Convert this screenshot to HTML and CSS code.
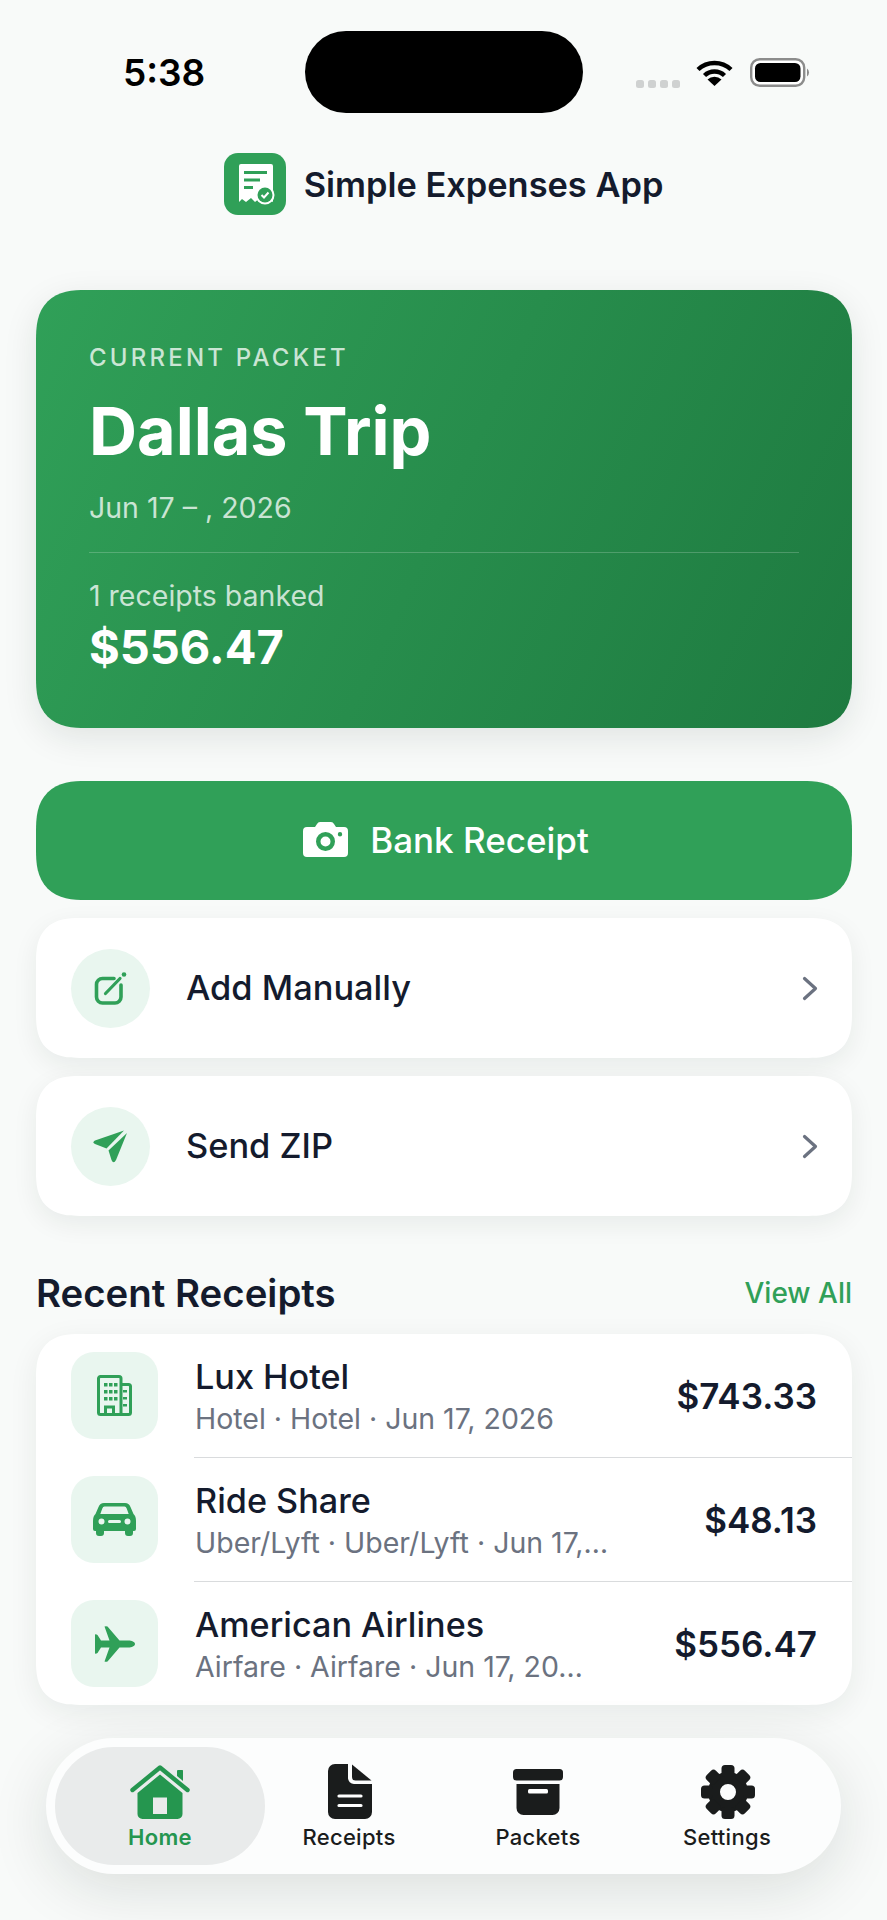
FILE: index.html
```html
<!DOCTYPE html>
<html lang="en">
<head>
<meta charset="utf-8">
<title>Simple Expenses App</title>
<link rel="stylesheet" href="styles.css">
</head>
<body>
<div class="screen">
  <div class="status">
    <div class="time">5:38</div>
    <div class="island"></div>
    <div class="status-icons">
      <div class="dots"><i></i><i></i><i></i><i></i></div>
      <svg class="wifi" viewBox="0 0 37 27"><path d="M2 10.5A24 24 0 0 1 35 10.5M8.5 16.5A14.5 14.5 0 0 1 28.5 16.5" fill="none" stroke="#000" stroke-width="4.4"/><path d="M18.5 27L11.5 20.5A10 10 0 0 1 25.5 20.5Z" fill="#000"/></svg>
      <svg class="battery" viewBox="0 0 60 29"><rect x="1.2" y="1.2" width="53" height="26.6" rx="8.5" fill="#fff" stroke="#8c8c8c" stroke-width="2.4"/><rect x="5" y="5" width="45.5" height="19" rx="5.5" fill="#000"/><path d="M57 10.500a5 5 0 0 1 0 8z" fill="#8c8c8c"/></svg>
    </div>
  </div>

  <header class="brand">
    <svg class="logo" viewBox="0 0 62 62">
      <rect width="62" height="62" rx="14" fill="#30a058"/>
      <path d="M17 11H47a2 2 0 0 1 2 2V49L44 46L40 49L36 45L31 49L27 45L22 49L18 46L15 49V13a2 2 0 0 1 2-2Z" fill="#fff"/>
      <path d="M20 19.500H43M20 27H36M20 34.500H29" stroke="#30a058" stroke-width="2.800" fill="none"/>
      <circle cx="41" cy="42" r="9.500" fill="#fff"/>
      <circle cx="41" cy="42" r="7.500" fill="#30a058"/>
      <path d="M37.500 42L40 44.500L44.500 39.500" stroke="#fff" stroke-width="2" fill="none"/>
    </svg>
    <div class="brand-name">Simple Expenses App</div>
  </header>

  <main class="content">
    <section class="packet">
      <div class="packet-label">CURRENT PACKET</div>
      <h1 class="packet-title">Dallas Trip</h1>
      <div class="packet-date">Jun 17 – , 2026</div>
      <div class="packet-rule"></div>
      <div class="packet-count">1 receipts banked</div>
      <div class="packet-total">$556.47</div>
    </section>

    <button class="primary">
      <svg class="camera" viewBox="0 0 45 35"><path fill-rule="evenodd" d="M4 5H12L14 2Q15 0 17 0H28Q30 0 31 2L33 5H41Q45 5 45 9V31Q45 35 41 35H4Q0 35 0 31V9Q0 5 4 5ZM22.500 10A9.500 9.500 0 1 0 22.500 29A9.500 9.500 0 1 0 22.500 10ZM22.500 14.500A5 5 0 1 1 22.500 24.500A5 5 0 1 1 22.500 14.500ZM37 10A2.200 2.200 0 1 0 37 14.400A2.200 2.200 0 1 0 37 10Z" fill="#fff"/></svg>
      <span>Bank Receipt</span>
    </button>

    <div class="action">
      <div class="action-icon">
        <svg class="i-edit" viewBox="0 0 33 33"><path d="M20 6.500H8.500A6 6 0 0 0 2.500 12.500V25A6 6 0 0 0 8.500 31H21A6 6 0 0 0 27 25V13" fill="none" stroke="#30a058" stroke-width="3.600" stroke-linecap="round"/><path d="M11.500 21.500L26 6.500" stroke="#30a058" stroke-width="3.200" stroke-linecap="round"/><circle cx="30" cy="2.500" r="2.300" fill="#30a058"/></svg>
      </div>
      <div class="action-text">Add Manually</div>
      <svg class="chev" viewBox="0 0 16 25"><path d="M2.500 2.500L13.500 12.500L2.500 22.500" fill="none" stroke="#6b7280" stroke-width="3.200" stroke-linecap="round" stroke-linejoin="round"/></svg>
    </div>

    <div class="action">
      <div class="action-icon">
        <svg class="i-send" viewBox="0 0 35 34"><path d="M31 1.500L2 11.500Q-1 13 2 15L13.500 19.500Z" fill="#30a058"/><path d="M34 4L23 31Q20.500 35.500 18.500 31L15.500 21.500Z" fill="#30a058"/></svg>
      </div>
      <div class="action-text">Send ZIP</div>
      <svg class="chev" viewBox="0 0 16 25"><path d="M2.500 2.500L13.500 12.500L2.500 22.500" fill="none" stroke="#6b7280" stroke-width="3.200" stroke-linecap="round" stroke-linejoin="round"/></svg>
    </div>

    <div class="section-head">
      <h2 class="section-title">Recent Receipts</h2>
      <div class="section-link">View All</div>
    </div>

    <section class="list">
      <div class="row">
        <div class="tile">
          <svg class="i-building" viewBox="0 0 35 41">
            <path d="M3.500 1.500H22A2 2 0 0 1 24 3.500V39.500H3.500A2 2 0 0 1 1.500 37.500V3.500A2 2 0 0 1 3.500 1.500ZM24 9.500H31.500A2 2 0 0 1 33.500 11.500V37.500A2 2 0 0 1 31.500 39.500H24M8.500 39V32H16.500V39" fill="none" stroke="#30a058" stroke-width="3"/>
            <path d="M7 8h3.500v3.500H7zM12 8h3.500v3.500H12zM17 8h3.500v3.500H17zM7 15h3.500v3.500H7zM12 15h3.500v3.500H12zM17 15h3.500v3.500H17zM7 22h3.500v3.500H7zM12 22h3.500v3.500H12zM17 22h3.500v3.500H17zM26 15h4v2.500h-4zM26 22h4v2.500h-4zM26 29h4v2.500h-4z" fill="#30a058"/>
          </svg>
        </div>
        <div class="row-text">
          <div class="row-name">Lux Hotel</div>
          <div class="row-sub">Hotel · Hotel · Jun 17, 2026</div>
        </div>
        <div class="row-amount">$743.33</div>
      </div>
      <div class="sep"></div>
      <div class="row">
        <div class="tile">
          <svg class="i-car" viewBox="0 0 43 33">
            <path fill-rule="evenodd" d="M11 0H32Q36 0 37.500 4L40.500 11Q43 13 43 18V26Q43 28 41 28H40V30Q40 33 37 33H35Q32 33 32 30V28H11V30Q11 33 8 33H6Q3 33 3 30V28H2Q0 28 0 26V18Q0 13 2.500 11L5.500 4Q7 0 11 0ZM11.500 3.500Q10 3.500 9.300 5.500L7.300 11H35.700L33.700 5.500Q33 3.500 31.500 3.500ZM8.500 15.500A3 3 0 1 0 8.500 21.500A3 3 0 1 0 8.500 15.500ZM34.500 15.500A3 3 0 1 0 34.500 21.500A3 3 0 1 0 34.500 15.500ZM16.500 17A1.500 1.500 0 0 0 16.500 20H26.500A1.500 1.500 0 0 0 26.500 17Z" fill="#30a058"/>
          </svg>
        </div>
        <div class="row-text">
          <div class="row-name">Ride Share</div>
          <div class="row-sub">Uber/Lyft · Uber/Lyft · Jun 17,…</div>
        </div>
        <div class="row-amount">$48.13</div>
      </div>
      <div class="sep"></div>
      <div class="row">
        <div class="tile">
          <svg class="i-plane" viewBox="0 0 40 36">
            <path d="M40 18C40 16 36.500 14.500 33.500 14.500H24.500L12.500 0.500Q11 0 9.500 0.500L14.500 14.500H6L2.500 9Q1 8 0 8.500V27.500Q1 28 2.500 27L6 21.500H14.500L9.500 35.500Q11 36 12.500 35.500L24.500 21.500H33.500C36.500 21.500 40 20 40 18Z" fill="#30a058"/>
          </svg>
        </div>
        <div class="row-text">
          <div class="row-name">American Airlines</div>
          <div class="row-sub">Airfare · Airfare · Jun 17, 20…</div>
        </div>
        <div class="row-amount">$556.47</div>
      </div>
    </section>
  </main>

  <nav class="tabbar">
    <div class="tab tab-active">
      <svg class="i-home" viewBox="0 0 60 54">
        <path d="M2.500 25L30 2.500L57.500 25" fill="none" stroke="#25964f" stroke-width="4.400" stroke-linecap="round" stroke-linejoin="round"/>
        <path d="M47 11V5.500Q47 5 48 5H52.500Q53 5 53 5.500V16Z" fill="#25964f"/>
        <path fill-rule="evenodd" d="M30 9.500L52.500 28V49A5 5 0 0 1 47.500 54H12.500A5 5 0 0 1 7.500 49V28ZM23 32.500V49H37V32.500Z" fill="#25964f"/>
      </svg>
      <span class="tab-label">Home</span>
    </div>
    <div class="tab">
      <svg class="i-doc" viewBox="0 0 44 55">
        <path d="M7 0H20V14A6 6 0 0 0 26 20H44V48A7 7 0 0 1 37 55H7A7 7 0 0 1 0 48V7A7 7 0 0 1 7 0Z" fill="#1a1c1c"/>
        <path d="M24 0.500L43.500 16.500H27.500A3.500 3.500 0 0 1 24 13Z" fill="#1a1c1c"/>
        <path d="M11 32H33M11 41.500H33" stroke="#fff" stroke-width="3.200" stroke-linecap="round"/>
      </svg>
      <span class="tab-label">Receipts</span>
    </div>
    <div class="tab">
      <svg class="i-box" viewBox="0 0 50 46">
        <rect width="50" height="11.500" rx="3.500" fill="#1a1c1c"/>
        <path d="M3.500 15H46.500V39A7 7 0 0 1 39.500 46H10.500A7 7 0 0 1 3.500 39Z" fill="#1a1c1c"/>
        <rect x="15" y="20" width="20" height="4.500" rx="1.500" fill="#fff"/>
      </svg>
      <span class="tab-label">Packets</span>
    </div>
    <div class="tab">
      <svg class="i-gear" viewBox="0 0 54 54">
        <circle cx="27" cy="27" r="14" fill="none" stroke="#1a1c1c" stroke-width="12"/>
        <g fill="#1a1c1c">
          <rect x="20.500" width="13" height="12" rx="3.500"/>
          <rect x="20.500" width="13" height="12" rx="3.500" transform="rotate(45 27 27)"/>
          <rect x="20.500" width="13" height="12" rx="3.500" transform="rotate(90 27 27)"/>
          <rect x="20.500" width="13" height="12" rx="3.500" transform="rotate(135 27 27)"/>
          <rect x="20.500" width="13" height="12" rx="3.500" transform="rotate(180 27 27)"/>
          <rect x="20.500" width="13" height="12" rx="3.500" transform="rotate(225 27 27)"/>
          <rect x="20.500" width="13" height="12" rx="3.500" transform="rotate(270 27 27)"/>
          <rect x="20.500" width="13" height="12" rx="3.500" transform="rotate(315 27 27)"/>
        </g>
      </svg>
      <span class="tab-label">Settings</span>
    </div>
  </nav>
</div>
</body>
</html>
```
FILE: styles.css
```css
* { box-sizing: border-box; }
html, body { margin: 0; padding: 0; }
body {
  width: 887px;
  height: 1920px;
  overflow: hidden;
  background: #f8faf9;
  font-family: Inter, "Liberation Sans", sans-serif;
  color: #141b2d;
}
.screen { width: 887px; height: 1920px; padding-top: 31px; }

.status {
  display: grid;
  grid-template-columns: 305px 278px 1fr;
  align-items: center;
  height: 82px;
}
.time {
  padding-left: 123px;
  font-size: 37px;
  font-weight: 600;
  color: #000;
}
.island { height: 82px; background: #000; border-radius: 41px; }
.status-icons { display: flex; align-items: center; padding-left: 53px; }
.dots { display: flex; gap: 4px; margin-top: 23px; }
.dots i { width: 8px; height: 8px; border-radius: 2.5px; background: #cfd1d1; }
.wifi { width: 37px; height: 27px; margin-left: 16px; }
.battery { width: 60px; height: 29px; margin-left: 17px; }

.brand {
  display: flex;
  justify-content: center;
  align-items: center;
  gap: 18px;
  margin-top: 40px;
  height: 62px;
}
.logo { width: 62px; height: 62px; }
.brand-name { font-size: 34.400px; font-weight: 600; }

.content { padding: 0 35px 0 36px; margin-top: 75px; }

.packet {
  height: 438px;
  padding: 55px 53px 0;
  border-radius: 50px;
  corner-shape: superellipse(1.4);
  background: linear-gradient(115deg, #30a058 0%, #1e7a40 100%);
  box-shadow: 0 10px 34px rgba(20, 40, 30, 0.1);
  color: #fff;
}
.packet-label {
  font-size: 24px;
  line-height: 26px;
  font-weight: 500;
  letter-spacing: 3.200px;
  color: rgba(255, 255, 255, 0.75);
}
.packet-title {
  margin: 20px 0 0;
  font-size: 66.500px;
  line-height: 80px;
  font-weight: 700;
}
.packet-date {
  margin-top: 20px;
  font-size: 28.500px;
  line-height: 34px;
  color: rgba(255, 255, 255, 0.75);
}
.packet-rule {
  height: 1px;
  margin-top: 27px;
  background: rgba(255, 255, 255, 0.2);
}
.packet-count {
  margin-top: 26px;
  font-size: 28.500px;
  line-height: 34px;
  color: rgba(255, 255, 255, 0.75);
}
.packet-total {
  margin-top: 6px;
  font-size: 47px;
  line-height: 56px;
  font-weight: 700;
}

.primary {
  display: flex;
  width: 100%;
  height: 119px;
  margin-top: 53px;
  padding: 0 0 2px 4px;
  align-items: center;
  justify-content: center;
  gap: 22px;
  border: 0;
  border-radius: 50px;
  corner-shape: superellipse(1.4);
  background: #30a058;
  color: #fff;
  font-family: inherit;
  font-size: 35px;
  font-weight: 500;
}
.camera { width: 45px; height: 35px; }

.action {
  display: flex;
  align-items: center;
  height: 140px;
  margin-top: 18px;
  padding: 0 35px;
  border-radius: 44px;
  corner-shape: superellipse(1.4);
  background: #fff;
  box-shadow: 0 8px 26px rgba(20, 40, 30, 0.07);
}
.action-icon {
  display: flex;
  align-items: center;
  justify-content: center;
  flex: none;
  width: 79px;
  height: 79px;
  border-radius: 50%;
  background: #e9f6ef;
}
.i-edit { width: 33px; height: 33px; }
.i-send { width: 35px; height: 34px; }
.action-text {
  flex: 1;
  margin-left: 36px;
  padding-bottom: 2px;
  font-size: 34.400px;
  font-weight: 550;
}
.chev { width: 16px; height: 25px; margin-right: -1px; }

.section-head {
  display: flex;
  justify-content: space-between;
  align-items: center;
  height: 46px;
  margin-top: 54px;
}
.section-title { margin: 0; font-size: 38.400px; font-weight: 600; }
.section-link { font-size: 28px; font-weight: 500; color: #30a058; }

.list {
  margin-top: 18px;
  border-radius: 44px;
  corner-shape: superellipse(1.4);
  background: #fff;
  box-shadow: 0 8px 30px rgba(20, 40, 30, 0.07);
}
.row {
  display: flex;
  align-items: center;
  padding: 18px 35px;
}
.tile {
  display: flex;
  align-items: center;
  justify-content: center;
  flex: none;
  width: 87px;
  height: 87px;
  border-radius: 23px;
  background: #e9f6ef;
}
.i-building { width: 35px; height: 41px; }
.i-car { width: 43px; height: 33px; }
.i-plane { width: 40px; height: 36px; }
.row-text { flex: 1; min-width: 0; margin-left: 37px; padding-top: 4px; }
.row-name { font-size: 34.200px; line-height: 42px; font-weight: 500; }
.row-sub { font-size: 28.500px; line-height: 41px; color: #6b7280; white-space: nowrap; }
.row-amount { font-size: 35px; font-weight: 600; }
.sep { height: 1px; margin-left: 158px; background: #d9dbdd; }

.tabbar {
  display: grid;
  grid-template-columns: repeat(4, 189px);
  align-items: center;
  width: 795px;
  height: 136px;
  margin: 33px 0 0 46px;
  padding: 0 19.500px;
  border-radius: 68px;
  background: #fcfdfd;
  box-shadow: 0 16px 60px rgba(20, 30, 25, 0.12);
}
.tab {
  display: flex;
  flex-direction: column;
  align-items: center;
  justify-content: flex-end;
  height: 118px;
  padding-bottom: 15px;
}
.tab-active {
  margin: 0 -10.500px;
  background: #e9ebeb;
  border-radius: 59px;
}
.tab-label { margin-top: 5.500px; font-size: 22px; line-height: 26px; font-weight: 500; letter-spacing: 0.3px; color: #1a1c1c; }
.tab-active .tab-label { color: #25964f; font-weight: 600; }
.i-home { width: 60px; height: 54px; }
.i-doc { width: 44px; height: 55px; margin-left: 1px; }
.i-box { width: 50px; height: 46px; margin-bottom: 4px; }
.i-gear { width: 54px; height: 54px; margin-left: 2px; }
```
